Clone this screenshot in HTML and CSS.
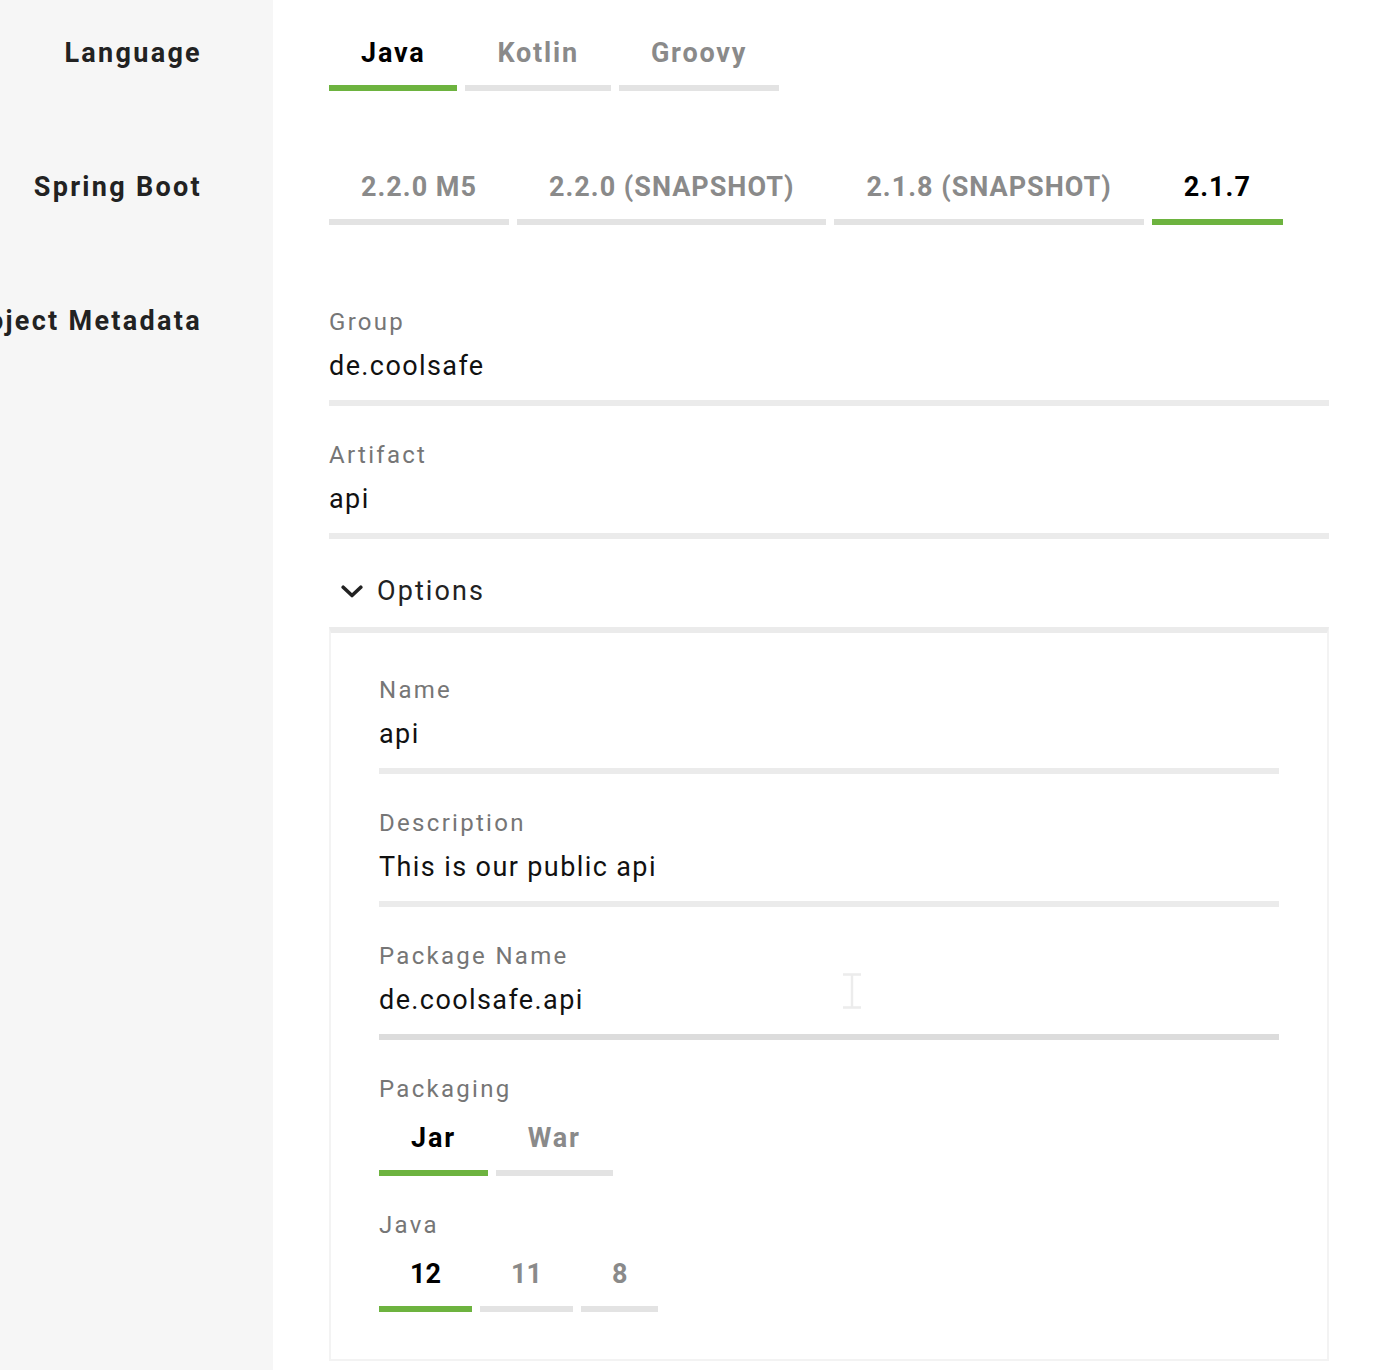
FILE: index.html
```html
<!DOCTYPE html>
<html lang="en">
<head>
<meta charset="utf-8">
<title>Spring Initializr</title>
<link rel="stylesheet" href="styles.css">
</head>
<body>
<div class="page">
  <div class="side"><span class="side-label">Language</span></div>
  <div class="main row-tabs">
    <div class="tabs">
      <span class="tab active">Java</span>
      <span class="tab">Kotlin</span>
      <span class="tab">Groovy</span>
    </div>
  </div>

  <div class="side"><span class="side-label">Spring Boot</span></div>
  <div class="main row-tabs">
    <div class="tabs versions">
      <span class="tab">2.2.0 M5</span>
      <span class="tab">2.2.0 (SNAPSHOT)</span>
      <span class="tab">2.1.8 (SNAPSHOT)</span>
      <span class="tab active">2.1.7</span>
    </div>
  </div>

  <div class="side"><span class="side-label">Project Metadata</span></div>
  <div class="main row-meta">
    <div class="field">
      <div class="field-label">Group</div>
      <div class="field-value">de.coolsafe</div>
    </div>
    <div class="field">
      <div class="field-label">Artifact</div>
      <div class="field-value">api</div>
    </div>
    <div class="options-toggle">
      <svg class="chevron" width="22" height="13" viewBox="0 0 22 13"><path d="M2.2 2.2 L11 10.5 L19.8 2.2" fill="none" stroke="#222" stroke-width="3.6" stroke-linecap="round" stroke-linejoin="round"/></svg>
      <span>Options</span>
    </div>
    <div class="options-box">
      <div class="field">
        <div class="field-label">Name</div>
        <div class="field-value">api</div>
      </div>
      <div class="field">
        <div class="field-label">Description</div>
        <div class="field-value">This is our public api</div>
      </div>
      <div class="field">
        <div class="field-label">Package Name</div>
        <div class="field-value hover">de.coolsafe.api</div>
      </div>
      <div class="field">
        <div class="field-label">Packaging</div>
        <div class="tabs inner">
          <span class="tab active">Jar</span>
          <span class="tab">War</span>
        </div>
      </div>
      <div class="field last">
        <div class="field-label">Java</div>
        <div class="tabs inner">
          <span class="tab num active">12</span>
          <span class="tab num">11</span>
          <span class="tab num">8</span>
        </div>
      </div>
    </div>
  </div>
  <svg class="ibeam" width="20" height="36" viewBox="0 0 20 36"><path d="M1 1.5 H8 M12 1.5 H19 M10 2 V34 M1 34.5 H8 M12 34.5 H19 M8 1.5 H12 M8 34.5 H12" fill="none" stroke="#ececec" stroke-width="2.4"/></svg>
</div>
</body>
</html>
```
FILE: styles.css
```css
html, body {
  margin: 0;
  padding: 0;
}
body {
  font-family: Roboto, "Liberation Sans", sans-serif;
  color: #111;
  background: #fff;
  overflow: hidden;
}
.page {
  position: relative;
  display: grid;
  grid-template-columns: 273px 1000px;
  column-gap: 56px;
  align-content: start;
  min-height: 100vh;
  background: linear-gradient(to right, #f6f6f6 273px, #ffffff 273px);
}
.side {
  display: flex;
  justify-content: flex-end;
  padding: 35px 71px 0 0;
  overflow: visible;
  min-width: 0;
}
.side-label {
  font-size: 27px;
  font-weight: 700;
  line-height: 36px;
  color: #222;
  letter-spacing: 2.3px;
  white-space: nowrap;
}
.row-tabs {
  padding: 35px 0 43px;
}
.row-meta {
  padding: 36px 0 0;
}
.tabs {
  display: flex;
  gap: 8px;
}
.tab {
  display: block;
  padding: 0 32px 14px;
  font-size: 27px;
  font-weight: 700;
  line-height: 36px;
  letter-spacing: 1.8px;
  color: #8a8a8a;
  border-bottom: 6px solid #e3e3e3;
  white-space: nowrap;
}
.versions .tab {
  letter-spacing: 1px;
}
.tab.num {
  letter-spacing: 0;
  padding: 0 31px 14px;
}
.tab.active {
  color: #000;
  border-bottom-color: #6db33f;
}
.tabs.inner {
  margin-top: 13px;
}
.field {
  margin-bottom: 31px;
}
.field.last {
  margin-bottom: 0;
}
.field-label {
  font-size: 24px;
  line-height: 36px;
  color: #767676;
  letter-spacing: 2.3px;
}
.field-value {
  font-size: 27px;
  line-height: 40px;
  padding: 6px 0 14px;
  border-bottom: 6px solid #ebebeb;
  color: #111;
  letter-spacing: 1.4px;
}
.field-value.hover {
  border-bottom-color: #dcdcdc;
}
.options-toggle {
  display: flex;
  align-items: center;
  gap: 14px;
  margin: 34px 0 18px;
  padding-left: 12px;
  font-size: 27px;
  line-height: 36px;
  letter-spacing: 2.1px;
  color: #222;
}
.chevron {
  display: block;
}
.options-box {
  border: 2px solid #f3f3f3;
  border-top: 6px solid #ebebeb;
  padding: 39px 48px 47px;
}
.ibeam {
  position: absolute;
  left: 842px;
  top: 973px;
}
```
